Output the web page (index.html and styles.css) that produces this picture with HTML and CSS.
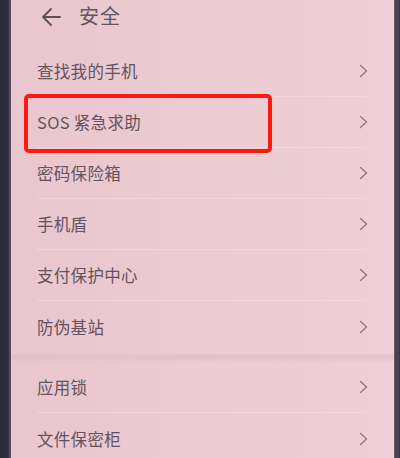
FILE: index.html
```html
<!DOCTYPE html>
<html lang="zh">
<head>
<meta charset="utf-8">
<link rel="stylesheet" href="styles.css">
</head>
<body>
<div class="device">
  <div class="bezel-left"></div>
  <div class="screen">
    <div class="header">
      <svg class="back" width="20" height="20" viewBox="0 0 20 20">
        <path d="M2 10 H19 M10 2 L2 10 L10 18" fill="none" stroke="#5e4e5a" stroke-width="1.8" stroke-linecap="round" stroke-linejoin="round"/>
      </svg>
      <span class="title">安全</span>
    </div>
    <ul class="list">
      <li class="row"><span class="label">查找我的手机</span><svg class="chev" width="9" height="14" viewBox="0 0 9 14"><path d="M1.5 1.5 L7.5 7 L1.5 12.5" fill="none" stroke="#8e7e8a" stroke-width="1.5" stroke-linecap="round" stroke-linejoin="round"/></svg></li>
      <li class="row"><span class="label">SOS 紧急求助</span><svg class="chev" width="9" height="14" viewBox="0 0 9 14"><path d="M1.5 1.5 L7.5 7 L1.5 12.5" fill="none" stroke="#8e7e8a" stroke-width="1.5" stroke-linecap="round" stroke-linejoin="round"/></svg></li>
      <li class="row"><span class="label">密码保险箱</span><svg class="chev" width="9" height="14" viewBox="0 0 9 14"><path d="M1.5 1.5 L7.5 7 L1.5 12.5" fill="none" stroke="#8e7e8a" stroke-width="1.5" stroke-linecap="round" stroke-linejoin="round"/></svg></li>
      <li class="row"><span class="label">手机盾</span><svg class="chev" width="9" height="14" viewBox="0 0 9 14"><path d="M1.5 1.5 L7.5 7 L1.5 12.5" fill="none" stroke="#8e7e8a" stroke-width="1.5" stroke-linecap="round" stroke-linejoin="round"/></svg></li>
      <li class="row"><span class="label">支付保护中心</span><svg class="chev" width="9" height="14" viewBox="0 0 9 14"><path d="M1.5 1.5 L7.5 7 L1.5 12.5" fill="none" stroke="#8e7e8a" stroke-width="1.5" stroke-linecap="round" stroke-linejoin="round"/></svg></li>
      <li class="row"><span class="label">防伪基站</span><svg class="chev" width="9" height="14" viewBox="0 0 9 14"><path d="M1.5 1.5 L7.5 7 L1.5 12.5" fill="none" stroke="#8e7e8a" stroke-width="1.5" stroke-linecap="round" stroke-linejoin="round"/></svg></li>
    </ul>
    <div class="gap"></div>
    <ul class="list">
      <li class="row"><span class="label">应用锁</span><svg class="chev" width="9" height="14" viewBox="0 0 9 14"><path d="M1.5 1.5 L7.5 7 L1.5 12.5" fill="none" stroke="#8e7e8a" stroke-width="1.5" stroke-linecap="round" stroke-linejoin="round"/></svg></li>
      <li class="row"><span class="label">文件保密柜</span><svg class="chev" width="9" height="14" viewBox="0 0 9 14"><path d="M1.5 1.5 L7.5 7 L1.5 12.5" fill="none" stroke="#8e7e8a" stroke-width="1.5" stroke-linecap="round" stroke-linejoin="round"/></svg></li>
    </ul>
    <div class="highlight"></div>
  </div>
  <div class="bezel-right"></div>
</div>
</body>
</html>
```
FILE: styles.css
```css
html, body {
  margin: 0;
  padding: 0;
  background: #2b2a38;
}
.device {
  display: flex;
  width: 400px;
  height: 458px;
  overflow: hidden;
}
.bezel-left {
  width: 11px;
  flex: none;
  background: linear-gradient(to right, #2a2a3a 0, #2f2d3e 8px, #6a5866 11px);
}
.bezel-right {
  width: 6px;
  flex: none;
  background: linear-gradient(to right, #7a6878 0, #3a3345 2px, #5a4a5e 4px, #2a2a38 6px);
}
.screen {
  position: relative;
  flex: 1;
  background: linear-gradient(to right, #eac6ce, #edccd3 60%, #efd0d7);
  font-family: "Noto Sans CJK SC", "Noto Sans", sans-serif;
  color: #635360;
  padding: 0 26px 0 26px;
}
.header {
  height: 46px;
  display: flex;
  align-items: flex-start;
  padding-top: 5px;
  box-sizing: border-box;
}
.back {
  margin: 2px 0 0 4px;
}
.title {
  margin-left: 18px;
  font-size: 20px;
  line-height: 22px;
  letter-spacing: 1px;
}
.list {
  list-style: none;
  margin: 0;
  padding: 0;
}
.row {
  height: 51px;
  display: flex;
  align-items: center;
  justify-content: space-between;
  box-sizing: border-box;
  border-bottom: 1px solid rgba(255, 255, 255, 0.22);
  margin-right: 2px;
}
.row:last-child {
  border-bottom: none;
}
.label {
  font-size: 16.5px;
  letter-spacing: 0.3px;
}
.chev {
  display: block;
  margin-right: -2px;
}
.gap {
  height: 10px;
  margin: 0 -26px 0 -26px;
  background: linear-gradient(to bottom, rgba(200,170,180,0), rgba(205,175,185,0.35), rgba(200,170,180,0));
}
.highlight {
  position: absolute;
  left: 13px;
  top: 94px;
  width: 248px;
  height: 59px;
  box-sizing: border-box;
  border: 4px solid #fa1a0e;
  border-radius: 5px;
}
```
